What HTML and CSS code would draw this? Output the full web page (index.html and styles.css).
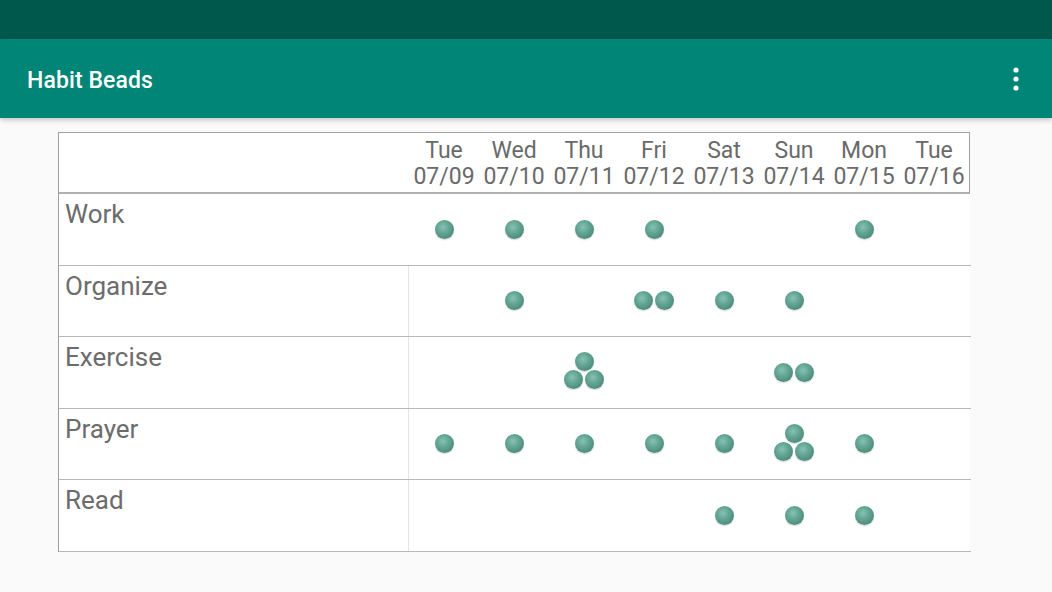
FILE: index.html
```html
<!DOCTYPE html>
<html>
<head>
<meta charset="utf-8">
<title>Habit Beads</title>
<link rel="stylesheet" href="styles.css">
</head>
<body>
<div class="statusbar"></div>
<header class="toolbar">
  <span class="title">Habit Beads</span>
  <svg class="menu" width="6" height="24" viewBox="0 0 6 24"><circle cx="3" cy="3" r="2.6" fill="#fff"/><circle cx="3" cy="12" r="2.6" fill="#fff"/><circle cx="3" cy="21" r="2.6" fill="#fff"/></svg>
</header>
<main class="content">
  <div class="grid">
    <div class="head">
      <div class="hcell corner"></div>
      <div class="hcell">Tue<br>07/09</div>
      <div class="hcell">Wed<br>07/10</div>
      <div class="hcell">Thu<br>07/11</div>
      <div class="hcell">Fri<br>07/12</div>
      <div class="hcell">Sat<br>07/13</div>
      <div class="hcell">Sun<br>07/14</div>
      <div class="hcell">Mon<br>07/15</div>
      <div class="hcell">Tue<br>07/16</div>
    </div>

    <div class="row first">
      <div class="label">Work</div>
      <div class="day"><span class="bead"></span></div>
      <div class="day"><span class="bead"></span></div>
      <div class="day"><span class="bead"></span></div>
      <div class="day"><span class="bead"></span></div>
      <div class="day"></div>
      <div class="day"></div>
      <div class="day"><span class="bead"></span></div>
      <div class="day"></div>
    </div>

    <div class="row">
      <div class="label">Organize</div>
      <div class="day"></div>
      <div class="day"><span class="bead"></span></div>
      <div class="day"></div>
      <div class="day"><div class="pair"><span class="bead"></span><span class="bead"></span></div></div>
      <div class="day"><span class="bead"></span></div>
      <div class="day"><span class="bead"></span></div>
      <div class="day"></div>
      <div class="day"></div>
    </div>

    <div class="row">
      <div class="label">Exercise</div>
      <div class="day"></div>
      <div class="day"></div>
      <div class="day"><div class="tri"><span class="bead"></span><div class="pair"><span class="bead"></span><span class="bead"></span></div></div></div>
      <div class="day"></div>
      <div class="day"></div>
      <div class="day"><div class="pair"><span class="bead"></span><span class="bead"></span></div></div>
      <div class="day"></div>
      <div class="day"></div>
    </div>

    <div class="row">
      <div class="label">Prayer</div>
      <div class="day"><span class="bead"></span></div>
      <div class="day"><span class="bead"></span></div>
      <div class="day"><span class="bead"></span></div>
      <div class="day"><span class="bead"></span></div>
      <div class="day"><span class="bead"></span></div>
      <div class="day"><div class="tri"><span class="bead"></span><div class="pair"><span class="bead"></span><span class="bead"></span></div></div></div>
      <div class="day"><span class="bead"></span></div>
      <div class="day"></div>
    </div>

    <div class="row">
      <div class="label">Read</div>
      <div class="day"></div>
      <div class="day"></div>
      <div class="day"></div>
      <div class="day"></div>
      <div class="day"><span class="bead"></span></div>
      <div class="day"><span class="bead"></span></div>
      <div class="day"><span class="bead"></span></div>
      <div class="day"></div>
    </div>
  </div>
</main>
</body>
</html>
```

FILE: styles.css
```css
html, body {
  margin: 0;
  padding: 0;
  background: #fafafa;
  font-family: Roboto, "Noto Sans", sans-serif;
}

.statusbar {
  height: 39px;
  background: #00574b;
}

.toolbar {
  position: relative;
  z-index: 1;
  height: 79px;
  background: #008577;
  display: flex;
  align-items: center;
  justify-content: space-between;
  padding: 0 33px 0 27px;
  box-shadow: 0 2px 5px rgba(0, 0, 0, 0.22);
}

.title {
  color: #ffffff;
  font-size: 23px;
  font-weight: 500;
  letter-spacing: 0.1px;
  padding-top: 3px;
}

.menu {
  display: block;
}

.content {
  padding: 14px 0 0 58px;
}

.grid {
  width: 911px;
  background: #ffffff;
  border-left: 1px solid #a0a0a0;
}

.head {
  display: grid;
  grid-template-columns: 350px repeat(8, 70px);
  border-top: 1px solid #a0a0a0;
  border-bottom: 2px solid #b0b0b0;
  border-right: 1px solid #a0a0a0;
  padding: 5px 0 2px;
}

.hcell {
  text-align: center;
  font-size: 23px;
  line-height: 26px;
  color: #6a6a6a;
  white-space: nowrap;
}

.row {
  display: grid;
  grid-template-columns: 350px repeat(8, 70px);
  height: 70.5px;
  border-bottom: 1px solid #b8b8b8;
  margin-right: -1px;
}

.label {
  font-size: 26px;
  line-height: 30px;
  color: #6c6c6c;
  padding: 5px 6px 3px 6px;
  border-right: 1px solid #e4e4e4;
}

.row.first .label {
  border-right-color: transparent;
}

.day {
  display: flex;
  align-items: center;
  justify-content: center;
}

.bead {
  display: block;
  width: 19px;
  height: 19px;
  border-radius: 50%;
  background: radial-gradient(circle at 42% 38%, #86c2b2 0%, #63a594 38%, #4b8a7a 76%, #36695c 100%);
  box-shadow: 0 1px 1.5px rgba(0, 0, 0, 0.18);
}

.pair {
  display: flex;
  gap: 1.5px;
}

.tri {
  display: flex;
  flex-direction: column;
  align-items: center;
  margin-top: -3px;
}

.tri .pair {
  margin-top: -1px;
}
```
